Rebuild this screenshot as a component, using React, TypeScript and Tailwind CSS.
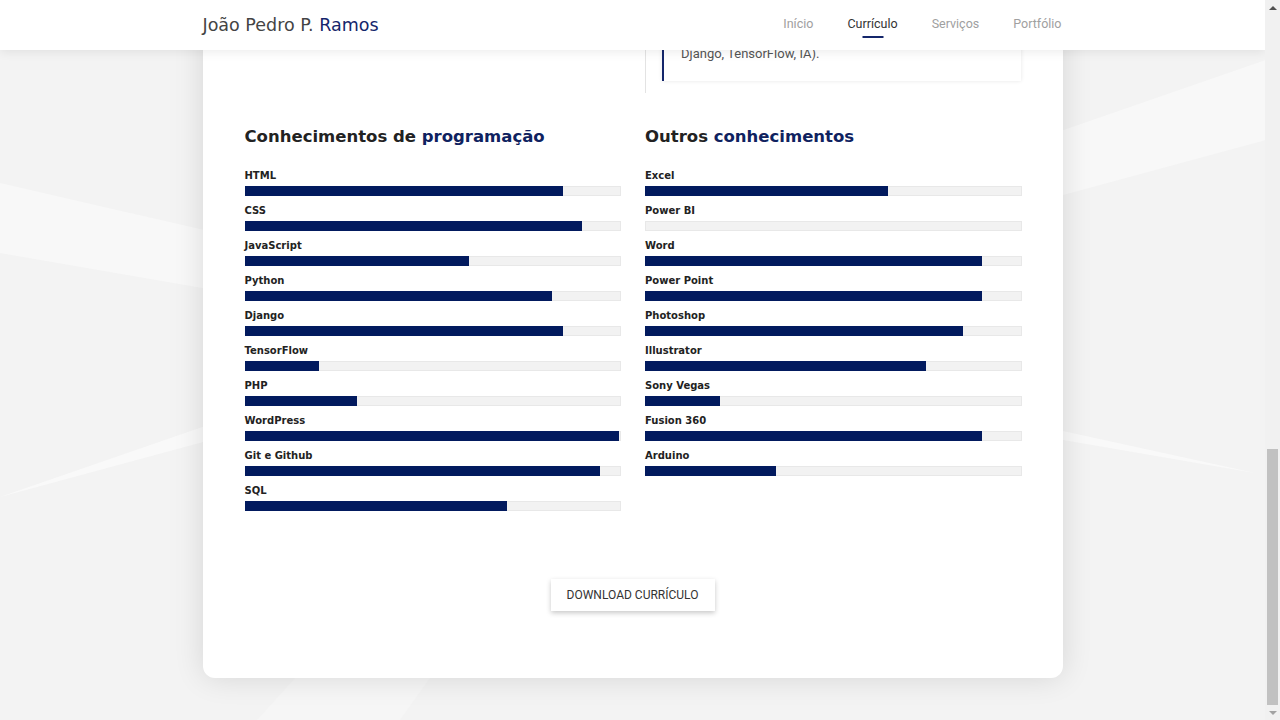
import { Fragment } from "react";

const programacao = [
  { name: "HTML", value: 85 },
  { name: "CSS", value: 90 },
  { name: "JavaScript", value: 60 },
  { name: "Python", value: 82 },
  { name: "Django", value: 85 },
  { name: "TensorFlow", value: 20 },
  { name: "PHP", value: 30 },
  { name: "WordPress", value: 100 },
  { name: "Git e Github", value: 95 },
  { name: "SQL", value: 70 },
];

const outros = [
  { name: "Excel", value: 65 },
  { name: "Power BI", value: 0 },
  { name: "Word", value: 90 },
  { name: "Power Point", value: 90 },
  { name: "Photoshop", value: 85 },
  { name: "Illustrator", value: 75 },
  { name: "Sony Vegas", value: 20 },
  { name: "Fusion 360", value: 90 },
  { name: "Arduino", value: 35 },
];

const heading = "font-['DejaVu_Sans',sans-serif]";
const body = "font-['Roboto',sans-serif]";

const SkillList = ({ items }: { items: { name: string; value: number }[] }) => (
  <div className="flex flex-col gap-[8px]">
    {items.map((s) => (
      <div key={s.name}>
        <div className={`${heading} text-[10px] leading-[14px] font-bold text-[#222]`}>{s.name}</div>
        <div className="mt-[3px] h-[10px] w-[calc(100%+1px)] bg-[#f2f2f2] border border-[#e8e8e8] flex">
          <div className="bg-[#021a5e] -my-px -ml-px h-[10px]" style={{ width: `${s.value}%` }} />
        </div>
      </div>
    ))}
  </div>
);

const Background = () => (
  <svg className="absolute inset-0" width="1265" height="720" viewBox="0 0 1265 720">
    <polygon points="0,183 300,252 300,305 0,253" fill="#f8f8f8" />
    <polygon points="0,497 240,414 240,432" fill="#f9f9f9" />
    <polygon points="1000,152 1266,60 1266,140 1000,212" fill="#f8f8f8" />
    <polygon points="1040,426 1255,473 1040,436" fill="#f9f9f9" />
    <polygon points="257,720 295,678 430,678 400,720" fill="#f6f6f6" />
  </svg>
);

const Header = () => (
  <div className="absolute top-0 left-0 right-0 h-[50px] bg-white shadow-[0_2px_10px_rgba(0,0,0,0.08)] z-10">
    <div className="w-[860px] mx-auto h-full flex items-center justify-between">
      <div className={`${heading} text-[17.5px] leading-[24px] text-[#444] pb-px`}>
        João Pedro P. <span className="text-[#14266b]">Ramos</span>
      </div>
      <nav className={`${body} flex items-center gap-[34px] text-[12.5px] leading-[18px] text-[#a0a0a0] pb-[3px] pr-px`}>
        <span>Início</span>
        <span className="relative text-[#333] after:content-[''] after:absolute after:left-1/2 after:-translate-x-1/2 after:-bottom-[5px] after:h-[2px] after:w-[21px] after:bg-[#14266b]">
          Currículo
        </span>
        <span>Serviços</span>
        <span>Portfólio</span>
      </nav>
    </div>
  </div>
);

const Scrollbar = () => (
  <div className="w-[15px] h-full bg-[#f1f1f1] flex flex-col">
    <div className="h-[15px] flex items-center justify-center">
      <div className="w-0 h-0 border-l-[4px] border-r-[4px] border-b-[4px] border-l-transparent border-r-transparent border-b-[#505050]" />
    </div>
    <div className="flex-1 flex flex-col justify-end px-[2px]">
      <div className="h-[256px] bg-[#c1c1c1]" />
    </div>
    <div className="h-[15px] flex items-center justify-center">
      <div className="w-0 h-0 border-l-[4px] border-r-[4px] border-t-[4px] border-l-transparent border-r-transparent border-t-[#a3a3a3]" />
    </div>
  </div>
);

export default function App() {
  return (
    <div className="flex w-[1280px] h-[720px] overflow-hidden">
      <div className="relative flex-1 h-full bg-[#f3f3f3] overflow-hidden">
        <Background />
        <Header />
        <div className="relative w-[860px] mx-auto -mt-[17px] bg-white rounded-[12px] shadow-[0_0_30px_rgba(0,0,0,0.12)] px-[42px] pb-[67px]">
          <div className="grid grid-cols-2 gap-[25px]">
            <div />
            <div className="border-l border-[#e3e3e3] pl-[16px] pb-[12px]">
              <div className={`${body} border-l-2 border-[#14266b] shadow-[0_0_4px_rgba(0,0,0,0.1)] pl-[17px] pr-4 pt-[60px] pb-4 text-[13px] leading-[22px] text-[#555]`}>
                Django, TensorFlow, IA).
              </div>
            </div>
          </div>

          <div className="grid grid-cols-2 gap-[25px] mt-[31px]">
            {[
              { a: "Conhecimentos de ", b: "programação", items: programacao },
              { a: "Outros ", b: "conhecimentos", items: outros },
            ].map((col) => (
              <Fragment key={col.b}>
                <div>
                  <h2 className={`${heading} text-[16.5px] leading-[24px] font-bold text-[#222] mt-px mb-[20px]`}>
                    {col.a}
                    <span className="text-[#0f2260]">{col.b}</span>
                  </h2>
                  <SkillList items={col.items} />
                </div>
              </Fragment>
            ))}
          </div>

          <div className="flex justify-center mt-[68px]">
            <button className={`${body} h-[32px] w-[164px] bg-white shadow-[0_2px_5px_rgba(0,0,0,0.22)] text-[12px] text-[#333] uppercase`}>
              Download Currículo
            </button>
          </div>
        </div>
      </div>
      <Scrollbar />
    </div>
  );
}
